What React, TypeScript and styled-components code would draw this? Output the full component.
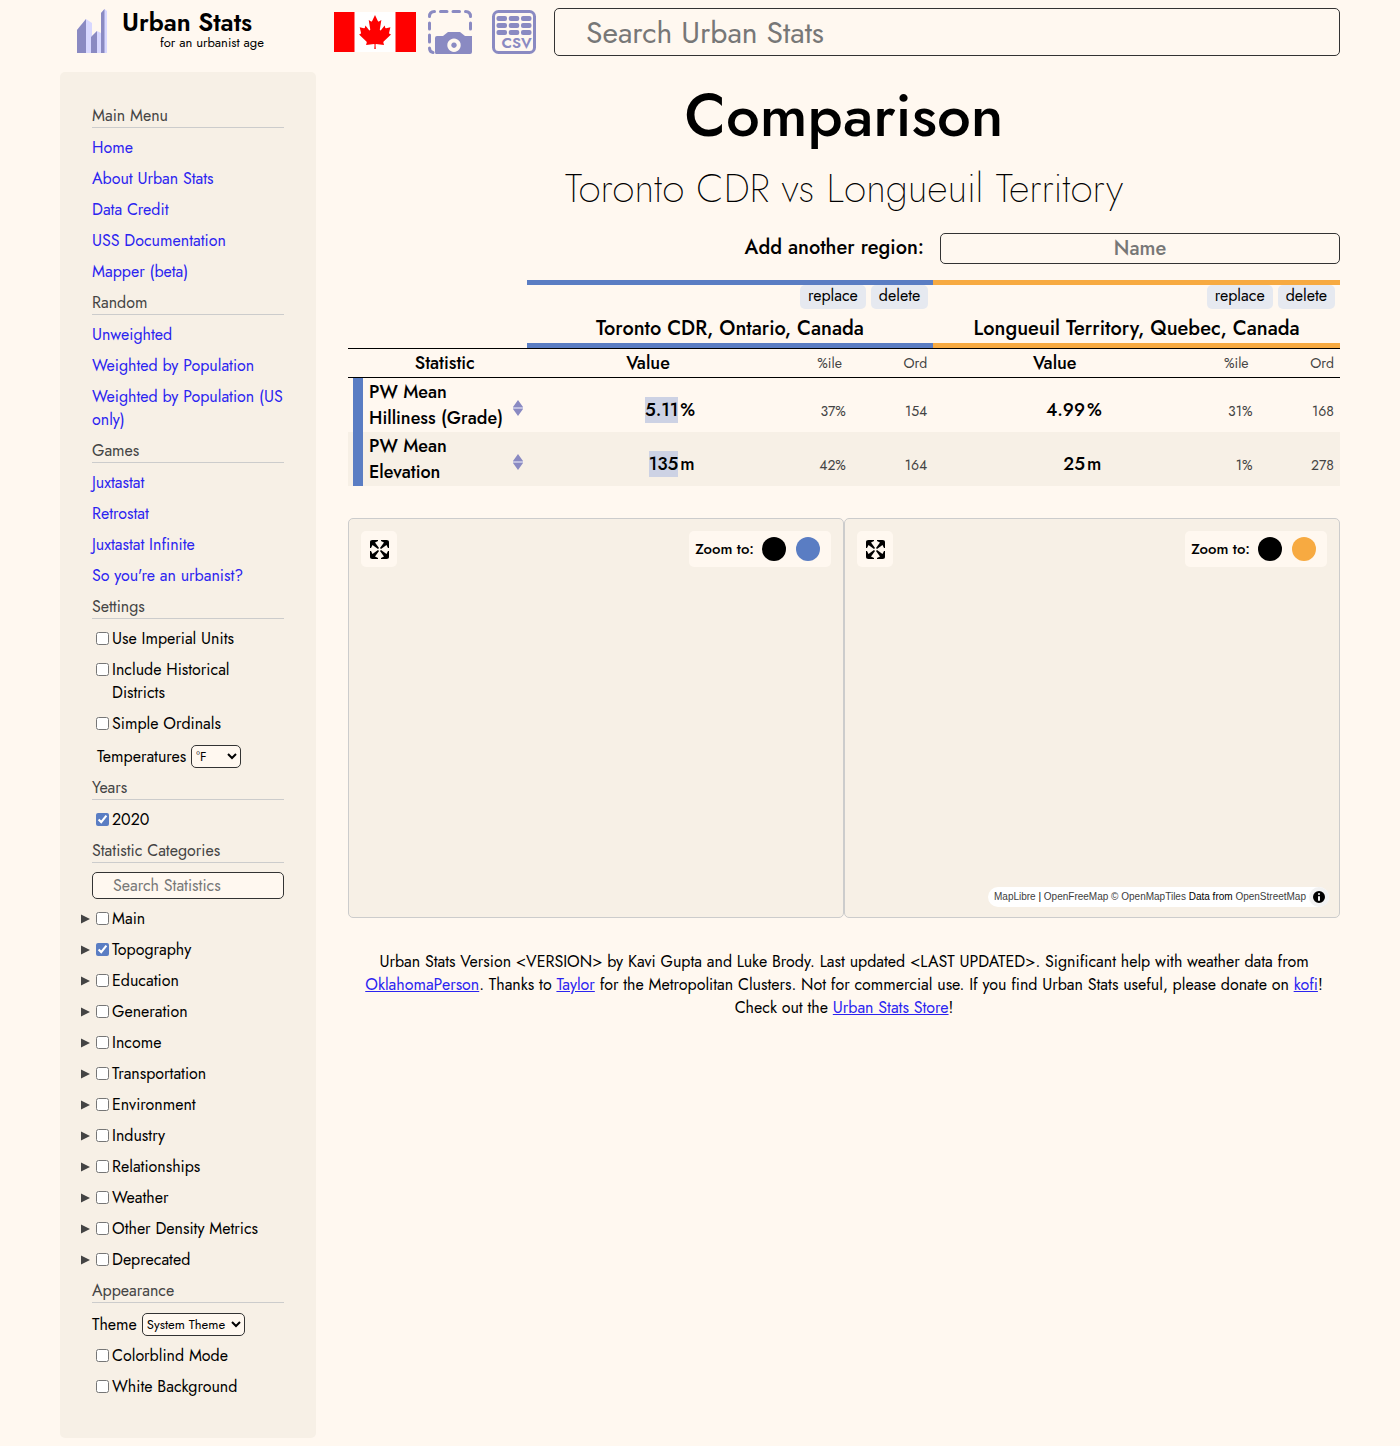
import React from 'react';
import styled, { createGlobalStyle } from 'styled-components';

const color = {
  page: '#fff8f0', panel: '#f7f0e6', text: '#000000', muted: '#444444', border: '#333333',
  line: '#cccccc', link: '#2b24f0', purple: '#8a8ac2', lilac: '#d8d8ff',
  blue: '#5a7dc3', orange: '#f7aa41', button: '#e6e9f0', highlight: '#cdd2e4',
};

const GlobalStyle = createGlobalStyle`
  *, *::before, *::after { box-sizing: border-box; }
  body { margin: 0; background: ${color.page}; color: ${color.text}; font-family: Jost, Lato, sans-serif; font-size: 16px; line-height: 23px; }
  h1, h2, p, ul { margin: 0; padding: 0; }
  button, input, select { font-family: inherit; }
`;

const Page = styled.div` max-width: 1280px; margin: 0 auto; padding-bottom: 8px; `;
const Header = styled.header` display: flex; align-items: center; height: 64px; margin-bottom: 8px; `;
const Brand = styled.a` display: flex; align-items: center; gap: 13px; width: 274px; padding-left: 15px; flex: none; color: inherit; text-decoration: none; `;
const BrandText = styled.span` display: flex; flex-direction: column; padding-bottom: 4px; `;
const BrandName = styled.span` font-size: 25px; line-height: 26px; font-weight: 600; `;
const Tagline = styled.span` padding-left: 38px; font-size: 13px; line-height: 16px; `;
const Tools = styled.div` display: flex; align-items: center; margin-right: 18px; `;
const ToolButton = styled.button<{ $gap?: number }>` display: block; padding: 0; border: 0; background: none; margin-left: ${p => p.$gap ?? 0}px; svg { display: block; } `;
const TextInput = styled.input` border: 1px solid ${color.border}; border-radius: 5px; background: ${color.page}; min-width: 0; &::placeholder { color: #777; opacity: 1; } `;
const SearchInput = styled(TextInput)` flex: 1; height: 48px; padding: 0 31px; font-size: 30px; `;

const Body = styled.div` display: flex; align-items: stretch; gap: 32px; `;
const Sidebar = styled.nav` width: 256px; flex: none; padding: 32px 32px 40px; border-radius: 5px; background: ${color.panel}; `;
const Section = styled.section` margin-bottom: 8px; &:last-child { margin-bottom: 0; } `;
const SectionTitle = styled.h2` font-size: 16px; line-height: 23px; font-weight: 400; color: ${color.muted}; border-bottom: 1px solid ${color.line}; margin-bottom: 8px; `;
const Items = styled.ul` list-style: none; display: flex; flex-direction: column; gap: 8px; `;
const MenuLink = styled.a` color: ${color.link}; text-decoration: none; `;
const CheckRow = styled.div` display: flex; align-items: flex-start; `;
const Expander = styled.button` width: 12px; height: 23px; margin-left: -12px; padding: 0; border: 0; background: none; svg { display: block; } `;
const CheckLabel = styled.label` display: flex; align-items: flex-start; `;
const Checkbox = styled.input` flex: none; width: 13px; height: 13px; margin: 5px 3px 0 4px; accent-color: ${color.blue}; `;
const SelectRow = styled.div<{ $inset?: number }>` display: flex; align-items: center; gap: 5px; height: 25px; padding-top: 2px; padding-left: ${p => p.$inset ?? 0}px; `;
const Select = styled.select<{ $width: number }>` width: ${p => p.$width}px; height: 23px; padding: 0; font-size: 13px; border: 1px solid ${color.border}; border-radius: 5px; background: ${color.page}; color: #000; `;
const SearchItem = styled.li` padding-top: 1px; `;
const StatSearch = styled(TextInput)` display: block; width: 100%; height: 27px; padding: 0 20px; font-size: 16px; `;

const Content = styled.main` flex: 1; min-width: 0; `;
const Title = styled.h1` text-align: center; font-size: 60px; line-height: 88px; font-weight: 500; `;
const Subtitle = styled.p` text-align: center; font-size: 40px; line-height: 56px; font-weight: 200; `;
const AddRegion = styled.div` display: flex; align-items: flex-start; justify-content: flex-end; gap: 16px; margin: 17px 0 16px; font-size: 20px; font-weight: 500; line-height: 30px; `;
const NameInput = styled(TextInput)` width: 400px; height: 31px; text-align: center; font-size: 20px; font-weight: 500; `;

const Table = styled.table` width: 100%; table-layout: fixed; border-collapse: separate; border-spacing: 0; td, th { padding: 0; } `;
const RegionHead = styled.th<{ $color: string }>` height: 68px; border-top: 5px solid ${p => p.$color}; border-bottom: 5px solid ${p => p.$color}; font-size: 20px; font-weight: 500; vertical-align: top; `;
const RegionActions = styled.div` display: flex; justify-content: flex-end; gap: 5px; padding-right: 5px; margin-bottom: 6px; `;
const Action = styled.button` height: 24px; padding: 0 8px 2px; border: 0; border-radius: 5px; background: ${color.button}; color: #000; font-size: 16px; line-height: 22px; `;
const RegionName = styled.div` line-height: 28px; `;
const ColumnHead = styled.th<{ $small?: boolean; $left?: number; $right?: number }>`
  height: 30px; border-top: 1px solid #000; border-bottom: 1px solid #000;
  font-size: ${p => (p.$small ? 14 : 18)}px; line-height: 26px; font-weight: ${p => (p.$small ? 400 : 500)};
  color: ${p => (p.$small ? color.muted : '#000')}; text-align: ${p => (p.$small ? 'right' : 'center')};
  && { padding-left: ${p => p.$left ?? 0}px; padding-right: ${p => p.$right ?? 0}px; }
`;
const StatRow = styled.tr` height: 54px; &:nth-child(even) { background: ${color.panel}; } `;
const StatName = styled.th` background: linear-gradient(to right, transparent 5px, ${color.blue} 5px, ${color.blue} 15px, transparent 15px); text-align: left; font-size: 18px; line-height: 26px; font-weight: 500; && { padding-left: 21px; padding-right: 4px; } `;
const StatNameInner = styled.div` display: flex; align-items: center; justify-content: space-between; `;
const SortButton = styled.button` padding: 6px 0 0; border: 0; background: none; svg { display: block; } `;
const Value = styled.td` text-align: right; font-size: 18px; line-height: 26px; font-weight: 500; && { padding-top: 10px; padding-right: 2px; } `;
const Mark = styled.span<{ $best?: boolean }>` display: inline-block; background: ${p => (p.$best ? color.highlight : 'transparent')}; `;
const Unit = styled(Value)` text-align: left; `;
const Small = styled.td` text-align: right; font-size: 14px; line-height: 20px; color: ${color.muted}; && { padding-top: 12px; padding-right: 6px; } `;

const Maps = styled.div` display: flex; margin: 32px 0; `;
const MapPanel = styled.section` position: relative; flex: 1; height: 400px; border: 1px solid ${color.line}; border-radius: 5px; background: ${color.panel}; font-family: "Liberation Sans", sans-serif; `;
const Fullscreen = styled.button` position: absolute; top: 12px; left: 12px; width: 36px; height: 36px; padding: 0; border: 0; border-radius: 5px; background: ${color.page}; svg { display: block; margin: auto; } `;
const ZoomBox = styled.div` position: absolute; top: 12px; right: 12px; height: 36px; display: flex; align-items: center; gap: 10px; padding: 0 11px 0 6px; border-radius: 5px; background: ${color.page}; font-family: Jost, Lato, sans-serif; font-size: 15px; font-weight: 500; `;
const ZoomLabel = styled.span` margin-right: -2px; `;
const Dot = styled.button<{ $color: string }>` width: 24px; height: 24px; padding: 0; border: 0; border-radius: 50%; background: ${p => p.$color}; `;
const Attribution = styled.div` position: absolute; right: 10px; bottom: 10px; height: 20px; display: flex; align-items: center; gap: 3px; padding-left: 6px; border-radius: 12px; background: #fff; font-size: 10px; line-height: 20px; white-space: nowrap; `;
const CreditLink = styled.a` color: #404040; text-decoration: none; `;
const InfoButton = styled.button` width: 20px; height: 20px; padding: 0; border: 0; border-radius: 50%; background: #f2f2f2; svg { display: block; } `;

const Footer = styled.footer` text-align: center; padding: 0 16px; a { color: ${color.link}; } `;

const Logo = () => (
  <svg width="34" height="46" viewBox="0 0 34 46" aria-hidden="true">
    <path d="M2 21 11 10 17 14V44H2Z" fill={color.lilac} />
    <path d="M2 21 11 10V44H2Z" fill={color.purple} />
    <path d="M16 28 22 22 26 24V44H16Z" fill={color.lilac} />
    <path d="M16 28 22 22V44H16Z" fill={color.purple} />
    <path d="M26 4 29.500 0 32 2V44H26Z" fill={color.lilac} />
    <path d="M26 4 29.500 0V44H26Z" fill={color.purple} />
  </svg>
);

const CanadaFlag = () => (
  <svg width="82" height="40" viewBox="0 0 82 40" aria-hidden="true">
    <path fill="#fff" d="M0 0h82v40H0z" />
    <path fill="#f00" d="M0 0h20.500v40H0zM61.500 0H82v40H61.500z" />
    <path fill="#f00" transform="translate(41 0) scale(.86 1) translate(-41 0)" d="M41 3l-3.300 6c-.4.7-1 .6-1.700.3l-2.300-1.200 1.700 9c.4 1.600-.8 1.600-1.400.9l-4.100-4.500-.7 2.300c-.1.3-.4.6-1 .5l-5-1 1.300 4.700c.3 1 .5 1.500-.3 1.800L22.500 22.600l8.500 6.900c.3.3.5.7.4 1.100l-.8 2.500 9.300-1.100c.4 0 .6.2.6.7l-.3 4.300h1.700l-.3-4.300c0-.5.2-.7.6-.7l9.300 1.100-.8-2.500c-.1-.4.1-.8.4-1.100l8.500-6.900-1.700-.8c-.8-.3-.6-.8-.3-1.800l1.300-4.700-5 1c-.6.1-.9-.2-1-.5l-.7-2.300-4.100 4.500c-.6.7-1.800.7-1.400-.9l1.700-9L46 9.300c-.7.3-1.300.4-1.700-.3z" />
  </svg>
);

const ScreenshotIcon = () => (
  <svg width="44" height="44" viewBox="0 0 44 44" aria-hidden="true">
    <g fill="none" stroke={color.purple} strokeWidth="3" strokeLinecap="round">
      <path d="M1.500 6.500Q1.500 1.500 6.500 1.500M37.500 1.500Q42.500 1.500 42.500 6.500M1.500 38Q1.500 42 5 42.500" />
      <path d="M12.500 1.500H19M25 1.500H31.500M1.500 13V19M1.500 25V32M42.500 13V19" />
    </g>
    <path fillRule="evenodd" fill={color.purple} d="M9 26H15L20 22H32L37 26H44V42Q44 44 42 44H8Q7 44 7 42V28Q7 26 9 26ZM26 28.500a6.700 6.700 0 1 0 .01 0ZM26 32.500a2.700 2.700 0 1 1-.01 0Z" />
  </svg>
);

const CsvIcon = () => (
  <svg width="44" height="44" viewBox="0 0 44 44" aria-hidden="true">
    <rect x="1.500" y="1.500" width="41" height="41" rx="5" fill="none" stroke={color.purple} strokeWidth="3" />
    {[6, 13, 20].map(y => [4.5, 16.75, 29].map(x => <rect key={`${x}-${y}`} x={x} y={y} width="10.500" height="5" rx="2" fill={color.purple} />))}
    <text x="24.500" y="37.500" textAnchor="middle" fontFamily="Jost, Lato, sans-serif" fontSize="15" fontWeight="600" fill={color.purple}>CSV</text>
  </svg>
);

const Triangle = () => <svg width="10" height="23" viewBox="0 0 10 23" aria-hidden="true"><path d="M1 7.500 10 12 1 16.500Z" fill={color.muted} /></svg>;
const SortIcon = () => <svg width="10" height="16" viewBox="0 0 10 16" aria-hidden="true"><path d="M5 0 10 7H0ZM0 9H10L5 16Z" fill={color.purple} /><path d="M0 7h10v2H0z" fill="#bfbfe0" /></svg>;
const ExpandIcon = () => (
  <svg width="29" height="29" viewBox="0 0 29 29" aria-hidden="true">
    <path d="M24 16v5.500c0 1.750-.75 2.500-2.500 2.500H16v-1l3-1.500-4-5.500 1-1 5.500 4 1.500-3zM6 16l1.500 3 5.500-4 1 1-4 5.500 3 1.500v1H7.500C5.750 24 5 23.250 5 21.500V16zm7-11v1l-3 1.500 4 5.500-1 1-5.500-4L6 13H5V7.500C5 5.750 5.750 5 7.500 5zm11 2.500c0-1.750-.75-2.500-2.500-2.500H16v1l3 1.500-4 5.500 1 1 5.500-4 1.500 3h1z" />
  </svg>
);
const InfoIcon = () => <svg width="20" height="20" viewBox="0 0 20 20" fillRule="evenodd" aria-hidden="true"><path d="M4 10a6 6 0 1 0 12 0 6 6 0 1 0-12 0m5-3a1 1 0 1 0 2 0 1 1 0 1 0-2 0m0 3a1 1 0 1 1 2 0v3a1 1 0 1 1-2 0" /></svg>;

const menus = [
  { title: 'Main Menu', links: ['Home', 'About Urban Stats', 'Data Credit', 'USS Documentation', 'Mapper (beta)'] },
  { title: 'Random', links: ['Unweighted', 'Weighted by Population', 'Weighted by Population (US only)'] },
  { title: 'Games', links: ['Juxtastat', 'Retrostat', 'Juxtastat Infinite', "So you're an urbanist?"] },
];
const categories = ['Main', 'Topography', 'Education', 'Generation', 'Income', 'Transportation', 'Environment', 'Industry', 'Relationships', 'Weather', 'Other Density Metrics', 'Deprecated'];
const regions = [
  { name: 'Toronto CDR, Ontario, Canada', color: color.blue },
  { name: 'Longueuil Territory, Quebec, Canada', color: color.orange },
];
const stats = [
  { name: 'PW Mean Hilliness (Grade)', unit: '%', cells: [{ value: '5.11', pct: '37%', ord: 154, best: true }, { value: '4.99', pct: '31%', ord: 168, best: false }] },
  { name: 'PW Mean Elevation', unit: 'm', cells: [{ value: '135', pct: '42%', ord: 164, best: true }, { value: '25', pct: '1%', ord: 278, best: false }] },
];

function Check({ label, checked, expandable }: { label: string; checked?: boolean; expandable?: boolean }) {
  return (
    <CheckRow as="li">
      {expandable && <Expander type="button" aria-label={`Expand ${label}`}><Triangle /></Expander>}
      <CheckLabel><Checkbox type="checkbox" defaultChecked={checked} />{label}</CheckLabel>
    </CheckRow>
  );
}

function Menu() {
  return (
    <Sidebar>
      {menus.map(m => (
        <Section key={m.title}>
          <SectionTitle>{m.title}</SectionTitle>
          <Items>{m.links.map(l => <li key={l}><MenuLink href="#">{l}</MenuLink></li>)}</Items>
        </Section>
      ))}
      <Section>
        <SectionTitle>Settings</SectionTitle>
        <Items>
          <Check label="Use Imperial Units" />
          <Check label="Include Historical Districts" />
          <Check label="Simple Ordinals" />
          <SelectRow as="li" $inset={5}>
            <label htmlFor="temperature">Temperatures</label>
            <Select id="temperature" $width={50}><option>°F</option><option>°C</option></Select>
          </SelectRow>
        </Items>
      </Section>
      <Section>
        <SectionTitle>Years</SectionTitle>
        <Items><Check label="2020" checked /></Items>
      </Section>
      <Section>
        <SectionTitle>Statistic Categories</SectionTitle>
        <Items>
          <SearchItem><StatSearch aria-label="Search Statistics" placeholder="Search Statistics" /></SearchItem>
          {categories.map(c => <Check key={c} label={c} checked={c === 'Topography'} expandable />)}
        </Items>
      </Section>
      <Section>
        <SectionTitle>Appearance</SectionTitle>
        <Items>
          <SelectRow as="li">
            <label htmlFor="theme">Theme</label>
            <Select id="theme" $width={103}><option>System Theme</option><option>Light Mode</option><option>Dark Mode</option></Select>
          </SelectRow>
          <Check label="Colorblind Mode" />
          <Check label="White Background" />
        </Items>
      </Section>
    </Sidebar>
  );
}

function Comparison() {
  return (
    <Table>
      <colgroup>
        <col style={{ width: '18%' }} />
        {regions.map(r => (
          <React.Fragment key={r.name}>
            <col style={{ width: '15.5%' }} /><col style={{ width: '8.7%' }} /><col style={{ width: '8.6%' }} /><col style={{ width: '8.2%' }} />
          </React.Fragment>
        ))}
      </colgroup>
      <thead>
        <tr>
          <td />
          {regions.map(r => (
            <RegionHead key={r.name} colSpan={4} $color={r.color}>
              <RegionActions><Action type="button">replace</Action><Action type="button">delete</Action></RegionActions>
              <RegionName>{r.name}</RegionName>
            </RegionHead>
          ))}
        </tr>
        <tr>
          <ColumnHead $left={15}>Statistic</ColumnHead>
          {regions.map(r => (
            <React.Fragment key={r.name}>
              <ColumnHead colSpan={2} $left={3}>Value</ColumnHead>
              <ColumnHead $small $right={10}>%ile</ColumnHead>
              <ColumnHead $small $right={6}>Ord</ColumnHead>
            </React.Fragment>
          ))}
        </tr>
      </thead>
      <tbody>
        {stats.map(s => (
          <StatRow key={s.name}>
            <StatName scope="row">
              <StatNameInner>{s.name}<SortButton type="button" aria-label={`Sort by ${s.name}`}><SortIcon /></SortButton></StatNameInner>
            </StatName>
            {s.cells.map(c => (
              <React.Fragment key={c.ord}>
                <Value><Mark $best={c.best}>{c.value}</Mark></Value>
                <Unit>{s.unit}</Unit>
                <Small>{c.pct}</Small>
                <Small>{c.ord}</Small>
              </React.Fragment>
            ))}
          </StatRow>
        ))}
      </tbody>
    </Table>
  );
}

export default function App() {
  return (
    <>
      <GlobalStyle />
      <Page>
        <Header>
          <Brand href="#">
            <Logo />
            <BrandText><BrandName>Urban Stats</BrandName><Tagline>for an urbanist age</Tagline></BrandText>
          </Brand>
          <Tools>
            <ToolButton type="button" aria-label="Canada"><CanadaFlag /></ToolButton>
            <ToolButton type="button" $gap={12} aria-label="Screenshot"><ScreenshotIcon /></ToolButton>
            <ToolButton type="button" $gap={20} aria-label="Download CSV"><CsvIcon /></ToolButton>
          </Tools>
          <SearchInput aria-label="Search Urban Stats" placeholder="Search Urban Stats" />
        </Header>
        <Body>
          <Menu />
          <Content>
            <Title>Comparison</Title>
            <Subtitle>Toronto CDR vs Longueuil Territory</Subtitle>
            <AddRegion>
              <label htmlFor="region">Add another region:</label>
              <NameInput id="region" placeholder="Name" />
            </AddRegion>
            <Comparison />
            <Maps>
              {regions.map((r, i) => (
                <MapPanel key={r.name} aria-label={r.name}>
                  <Fullscreen type="button" aria-label="Enter fullscreen"><ExpandIcon /></Fullscreen>
                  <ZoomBox>
                    <ZoomLabel>Zoom to:</ZoomLabel>
                    <Dot type="button" aria-label="All regions" $color="#000" />
                    <Dot type="button" aria-label={r.name} $color={r.color} />
                  </ZoomBox>
                  {i === 1 && (
                    <Attribution>
                      <span>
                        <CreditLink href="#">MapLibre</CreditLink> | <CreditLink href="#">OpenFreeMap</CreditLink>{' '}
                        <CreditLink href="#">© OpenMapTiles</CreditLink> Data from <CreditLink href="#">OpenStreetMap</CreditLink>
                      </span>
                      <InfoButton type="button" aria-label="Toggle attribution"><InfoIcon /></InfoButton>
                    </Attribution>
                  )}
                </MapPanel>
              ))}
            </Maps>
            <Footer>
              Urban Stats Version &lt;VERSION&gt; by Kavi Gupta and Luke Brody. Last updated &lt;LAST UPDATED&gt;. Significant help with weather data from{' '}
              <a href="#">OklahomaPerson</a>. Thanks to <a href="#">Taylor</a> for the Metropolitan Clusters. Not for commercial use. If you find Urban Stats useful, please donate on{' '}
              <a href="#">kofi</a>! Check out the <a href="#">Urban Stats Store</a>!
            </Footer>
          </Content>
        </Body>
      </Page>
    </>
  );
}
